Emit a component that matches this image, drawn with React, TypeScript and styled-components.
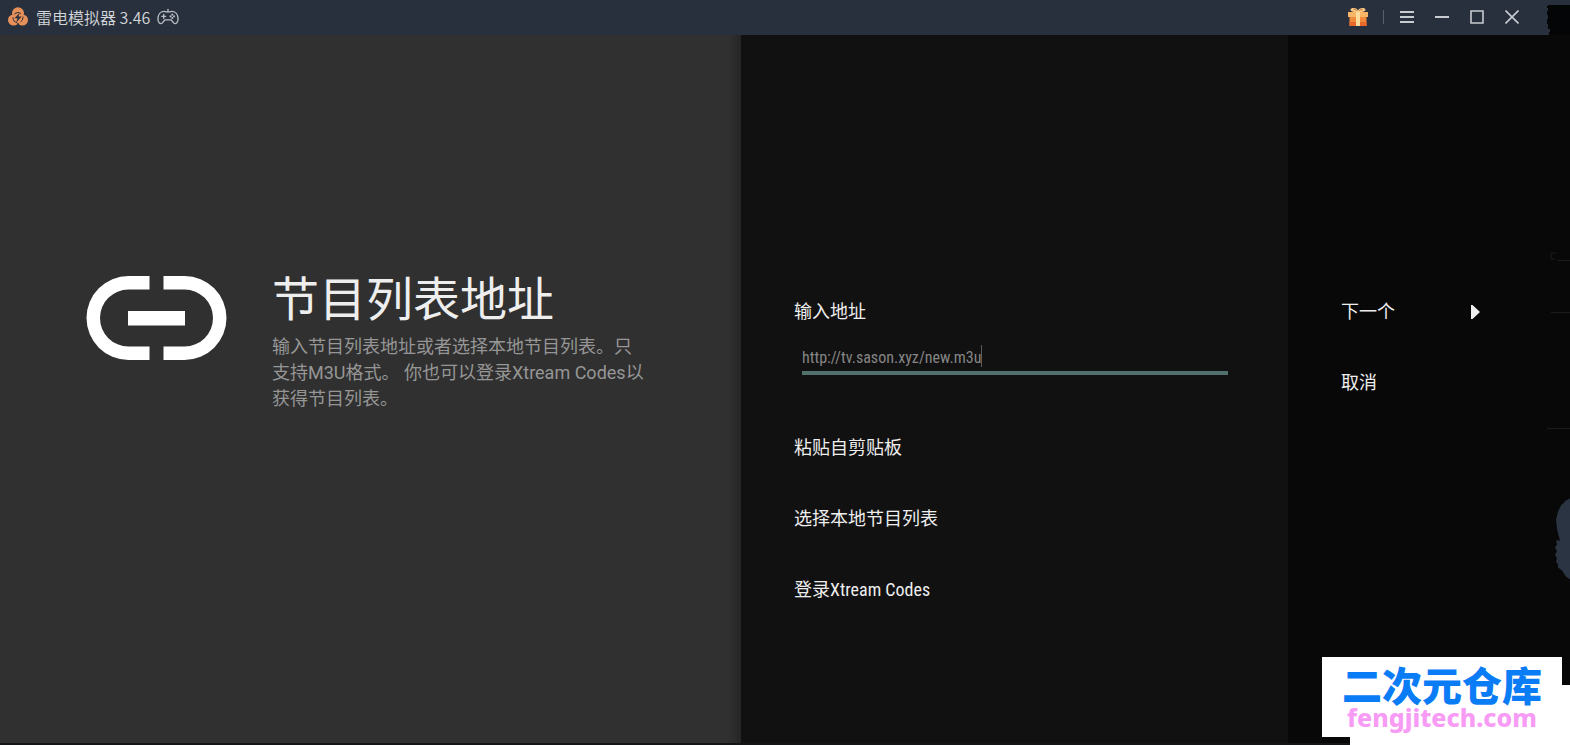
import React, { useState } from "react";
import styled, { createGlobalStyle } from "styled-components";

const GlobalStyle = createGlobalStyle`
  *, *::before, *::after { box-sizing: border-box; }
  html { background: #080808; }
  body {
    margin: 0;
    font-family: Roboto, "Noto Sans CJK SC", sans-serif;
    color: #eeeeee;
  }
  button, input {
    font: inherit;
    color: inherit;
    background: none;
    border: 0;
    padding: 0;
    margin: 0;
  }
  button { cursor: pointer; }
`;

const Window = styled.div`
  position: relative;
  display: flex;
  flex-direction: column;
  min-height: 100vh;
  overflow: hidden;
`;

const TitleBar = styled.header`
  position: relative;
  display: flex;
  align-items: center;
  justify-content: space-between;
  height: 35px;
  padding: 0 41px 2px 8px;
  background: #28303d;
`;

const TornCorner = styled.svg`
  position: absolute;
  right: 0;
  top: 5px;
`;

const AppName = styled.div`
  display: flex;
  align-items: center;
  gap: 7px;
  font-family: "Noto Sans CJK SC", sans-serif;
  font-size: 16px;
  line-height: 24px;
  font-weight: 350;
  color: #d4d6d9;
  white-space: nowrap;
`;

const WindowControls = styled.div`
  display: flex;
  align-items: center;
`;

const ControlButton = styled.button<{ $gift?: boolean }>`
  display: flex;
  align-items: center;
  justify-content: center;
  width: 35px;
  height: 33px;
  margin-right: ${(p) => (p.$gift ? "8px" : "0")};
`;

const Separator = styled.span`
  width: 1px;
  height: 14px;
  margin-right: 5px;
  background: #566070;
`;

const Panels = styled.main`
  flex: 1;
  display: grid;
  grid-template-columns: 741fr 547fr 282fr;
  border-bottom: 2px solid #141516;
`;

const Guidance = styled.section`
  display: flex;
  align-items: flex-start;
  gap: 45px;
  padding: 241px 24px 24px 86px;
  background: linear-gradient(to left, #262626, #303030 12px);
`;

const GuidanceText = styled.div`
  flex: 1;
  max-width: 376px;
  margin-top: -9px;
`;

const Heading = styled.h1`
  margin: 0 0 1px;
  font-size: 47px;
  line-height: 66px;
  font-weight: 400;
  white-space: nowrap;
`;

const Description = styled.p`
  margin: 0;
  font-size: 18px;
  line-height: 26px;
  color: #969696;
`;

const ActionPanel = styled.section<{ $dark?: boolean }>`
  display: flex;
  flex-direction: column;
  padding: 241px 60px 24px 53px;
  background: ${(p) => (p.$dark ? "#080808" : "#111111")};
`;

const AddressGroup = styled.div`
  display: flex;
  flex-direction: column;
  height: 136px;
  padding-top: 23px;
`;

const AddressLabel = styled.label`
  font-size: 18px;
  line-height: 26px;
`;

const AddressField = styled.div`
  position: relative;
  margin: 18px 0 0 8px;
  height: 32px;
  border-bottom: 4px solid #51716d;
`;

const AddressInput = styled.input`
  display: block;
  width: 100%;
  height: 28px;
  font-family: "Roboto Condensed", "Liberation Sans Narrow", Roboto, sans-serif;
  font-size: 16px;
  color: #858585;
  outline: none;
`;

const Caret = styled.span`
  position: absolute;
  left: 179px;
  top: 2px;
  width: 1px;
  height: 22px;
  background: #5a5a5a;
`;

const Action = styled.button`
  display: flex;
  align-items: center;
  justify-content: space-between;
  height: 71px;
  font-family: "Roboto Condensed", "Liberation Sans Narrow", "Noto Sans CJK SC", sans-serif;
  font-size: 18px;
  line-height: 26px;
  text-align: left;
  white-space: nowrap;
`;

const NextArrow = styled.svg`
  margin-right: 30px;
`;

const EdgeTraces = styled.svg`
  position: absolute;
  right: 0;
  top: 250px;
`;

const Watermark = styled.aside`
  position: absolute;
  right: 8px;
  bottom: 8px;
  width: 240px;
  height: 80px;
  padding-top: 6px;
  background: #ffffff;
  text-align: center;
  font-weight: 900;
`;

const WatermarkBacking = styled.div`
  position: absolute;
  right: 0;
  bottom: 0;
  width: 220px;
  height: 60px;
  background: #ffffff;
`;

const SiteName = styled.div`
  font-family: "Noto Sans CJK SC", sans-serif;
  font-size: 40px;
  line-height: 42px;
  color: #0a7cf5;
`;

const SiteHost = styled.div`
  font-family: "Noto Sans", sans-serif;
  font-weight: 800;
  font-size: 25px;
  line-height: 24px;
  color: #f79bf5;
`;

const AppLogo = () => (
  <svg width="21" height="20" viewBox="0 0 21 20" aria-hidden="true">
    <g fill="#e8905a">
      <circle cx="10" cy="6.2" r="6" />
      <circle cx="5.6" cy="13" r="5.6" />
      <circle cx="14.4" cy="13" r="5.6" />
    </g>
    <circle cx="10" cy="10.6" r="5" fill="none" stroke="#28303d" strokeWidth="1" strokeDasharray="7 3.500" strokeDashoffset="2" />
    <path d="M11.800 5.800 6.400 11.200h3.100L8.200 15.400l5.400-6h-3.200z" fill="#28303d" />
    <path d="M10 16v4" stroke="#28303d" strokeWidth="1.200" />
  </svg>
);

const Gamepad = () => (
  <svg width="22" height="18" viewBox="0 0 23 18" fill="none" stroke="#b9bec5" strokeWidth="1.4" strokeLinecap="round" aria-hidden="true">
    <path d="M7 3.2c1-.3 1.700.4 2.500.5h4c.800-.1 1.500-.8 2.500-.5 3.500.2 5.800 3.500 6 7.500.2 4-2.200 6-4.200 4.800-1.500-.9-2-3-3.300-3.500h-6c-1.300.5-1.800 2.600-3.300 3.500-2 1.200-4.400-.8-4.200-4.800.2-4 2.500-7.300 6-7.500z" />
    <path d="M11.500 3.500V1M5 8.300h4M7 6.300v4" />
    <g fill="#b9bec5" stroke="none">
      <circle cx="16" cy="6.500" r="1.100" />
      <circle cx="16" cy="10.100" r="1.100" />
      <circle cx="14.200" cy="8.300" r="1.100" />
      <circle cx="17.800" cy="8.300" r="1.100" />
    </g>
  </svg>
);

const Gift = () => (
  <svg width="20" height="20" viewBox="0 0 20 20" aria-hidden="true">
    <path d="M1.500 9h17v10h-17z" fill="#f08a3c" />
    <path d="M1.500 15h17v4h-17z" fill="#e8682c" />
    <path d="M0 5h20v5H0z" fill="#f7b566" />
    <path d="M8 5h4v14H8z" fill="#fbdc9c" />
    <path d="M10 5C7 5 2.500 5 2.500 2.700 2.500.5 8.500 0 10 3.500c1.500-3.500 7.500-3 7.500-.8C17.500 5 13 5 10 5z" fill="#f9c983" />
    <path d="M5.500 2.600c1-.6 2.500.3 3.200 1.400M14.500 2.600c-1-.6-2.500.3-3.200 1.400" stroke="#c56a30" strokeWidth="0.900" fill="none" />
  </svg>
);

const LinkIcon = () => (
  <svg width="141" height="84" viewBox="0 0 141 84" fill="#ffffff" aria-hidden="true">
    <path d="M63.500 0H42.500a42 42 0 0 0 0 84h21V70.500h-21a28.500 28.500 0 0 1 0-57h21z" />
    <path d="M77.500 0h21a42 42 0 0 1 0 84h-21V70.500h21a28.500 28.500 0 0 0 0-57h-21z" />
    <path d="M42 35h57v14.500H42z" />
  </svg>
);

const controls = [
  { label: "菜单", path: "M0 2h14M0 7h14M0 12h14", weight: 2 },
  { label: "最小化", path: "M0 7h14", weight: 2 },
  { label: "最大化", path: "M1 1h12v12H1z", weight: 1.6 },
  { label: "关闭", path: "M.5.5l13 13M13.500.5L.5 13.500", weight: 1.6 },
];

export default function App() {
  const [address, setAddress] = useState("http://tv.sason.xyz/new.m3u");

  return (
    <>
      <GlobalStyle />
      <Window>
        <TitleBar>
          <AppName>
            <AppLogo />
            <span>雷电模拟器 3.46</span>
            <Gamepad />
          </AppName>
          <WindowControls>
            <ControlButton $gift aria-label="礼物">
              <Gift />
            </ControlButton>
            <Separator />
            {controls.map((c) => (
              <ControlButton key={c.label} aria-label={c.label}>
                <svg width="14" height="14" viewBox="0 0 14 14" fill="none" stroke="#c8cbd0" strokeWidth={c.weight} aria-hidden="true">
                  <path d={c.path} />
                </svg>
              </ControlButton>
            ))}
          </WindowControls>
          <TornCorner width="23" height="30" viewBox="0 0 23 30" aria-hidden="true">
            <path d="M1 0h22v30H2v-3h1v-3H1v-5H0v-5h1v-4H0V6h1V3H0V1h1z" fill="#040506" />
          </TornCorner>
        </TitleBar>

        <Panels>
          <Guidance>
            <LinkIcon />
            <GuidanceText>
              <Heading>节目列表地址</Heading>
              <Description>
                输入节目列表地址或者选择本地节目列表。只支持M3U格式。 你也可以登录Xtream Codes以获得节目列表。
              </Description>
            </GuidanceText>
          </Guidance>

          <ActionPanel>
            <AddressGroup>
              <AddressLabel htmlFor="address">输入地址</AddressLabel>
              <AddressField>
                <AddressInput
                  id="address"
                  type="text"
                  spellCheck={false}
                  value={address}
                  onChange={(e) => setAddress(e.target.value)}
                />
                <Caret />
              </AddressField>
            </AddressGroup>
            <Action>粘贴自剪贴板</Action>
            <Action>选择本地节目列表</Action>
            <Action>登录Xtream Codes</Action>
          </ActionPanel>

          <ActionPanel $dark>
            <Action>
              下一个
              <NextArrow width="9" height="14" viewBox="0 0 9 14" fill="#eeeeee" aria-hidden="true">
                <path d="M0 0h1.500L9 7l-7.500 7H0z" />
              </NextArrow>
            </Action>
            <Action>取消</Action>
          </ActionPanel>
        </Panels>

        <EdgeTraces width="24" height="330" viewBox="0 0 24 330" aria-hidden="true">
          <path d="M10 3H5v6h4M12 10.500h12M5 62.500h19M1 178.500h23" stroke="#1b1c1d" fill="none" />
          <path d="M24 248.500l-4 2-5 5-3 6-2 8 1 9 1 5 2 7h-4l1 4-2 3 2 4-2 3 2 4-1 3 2 3v3l4 3 4 6 4 3z" fill="#2a3442" />
        </EdgeTraces>

        <WatermarkBacking />
        <Watermark>
          <SiteName>二次元仓库</SiteName>
          <SiteHost>fengjitech.com</SiteHost>
        </Watermark>
      </Window>
    </>
  );
}
